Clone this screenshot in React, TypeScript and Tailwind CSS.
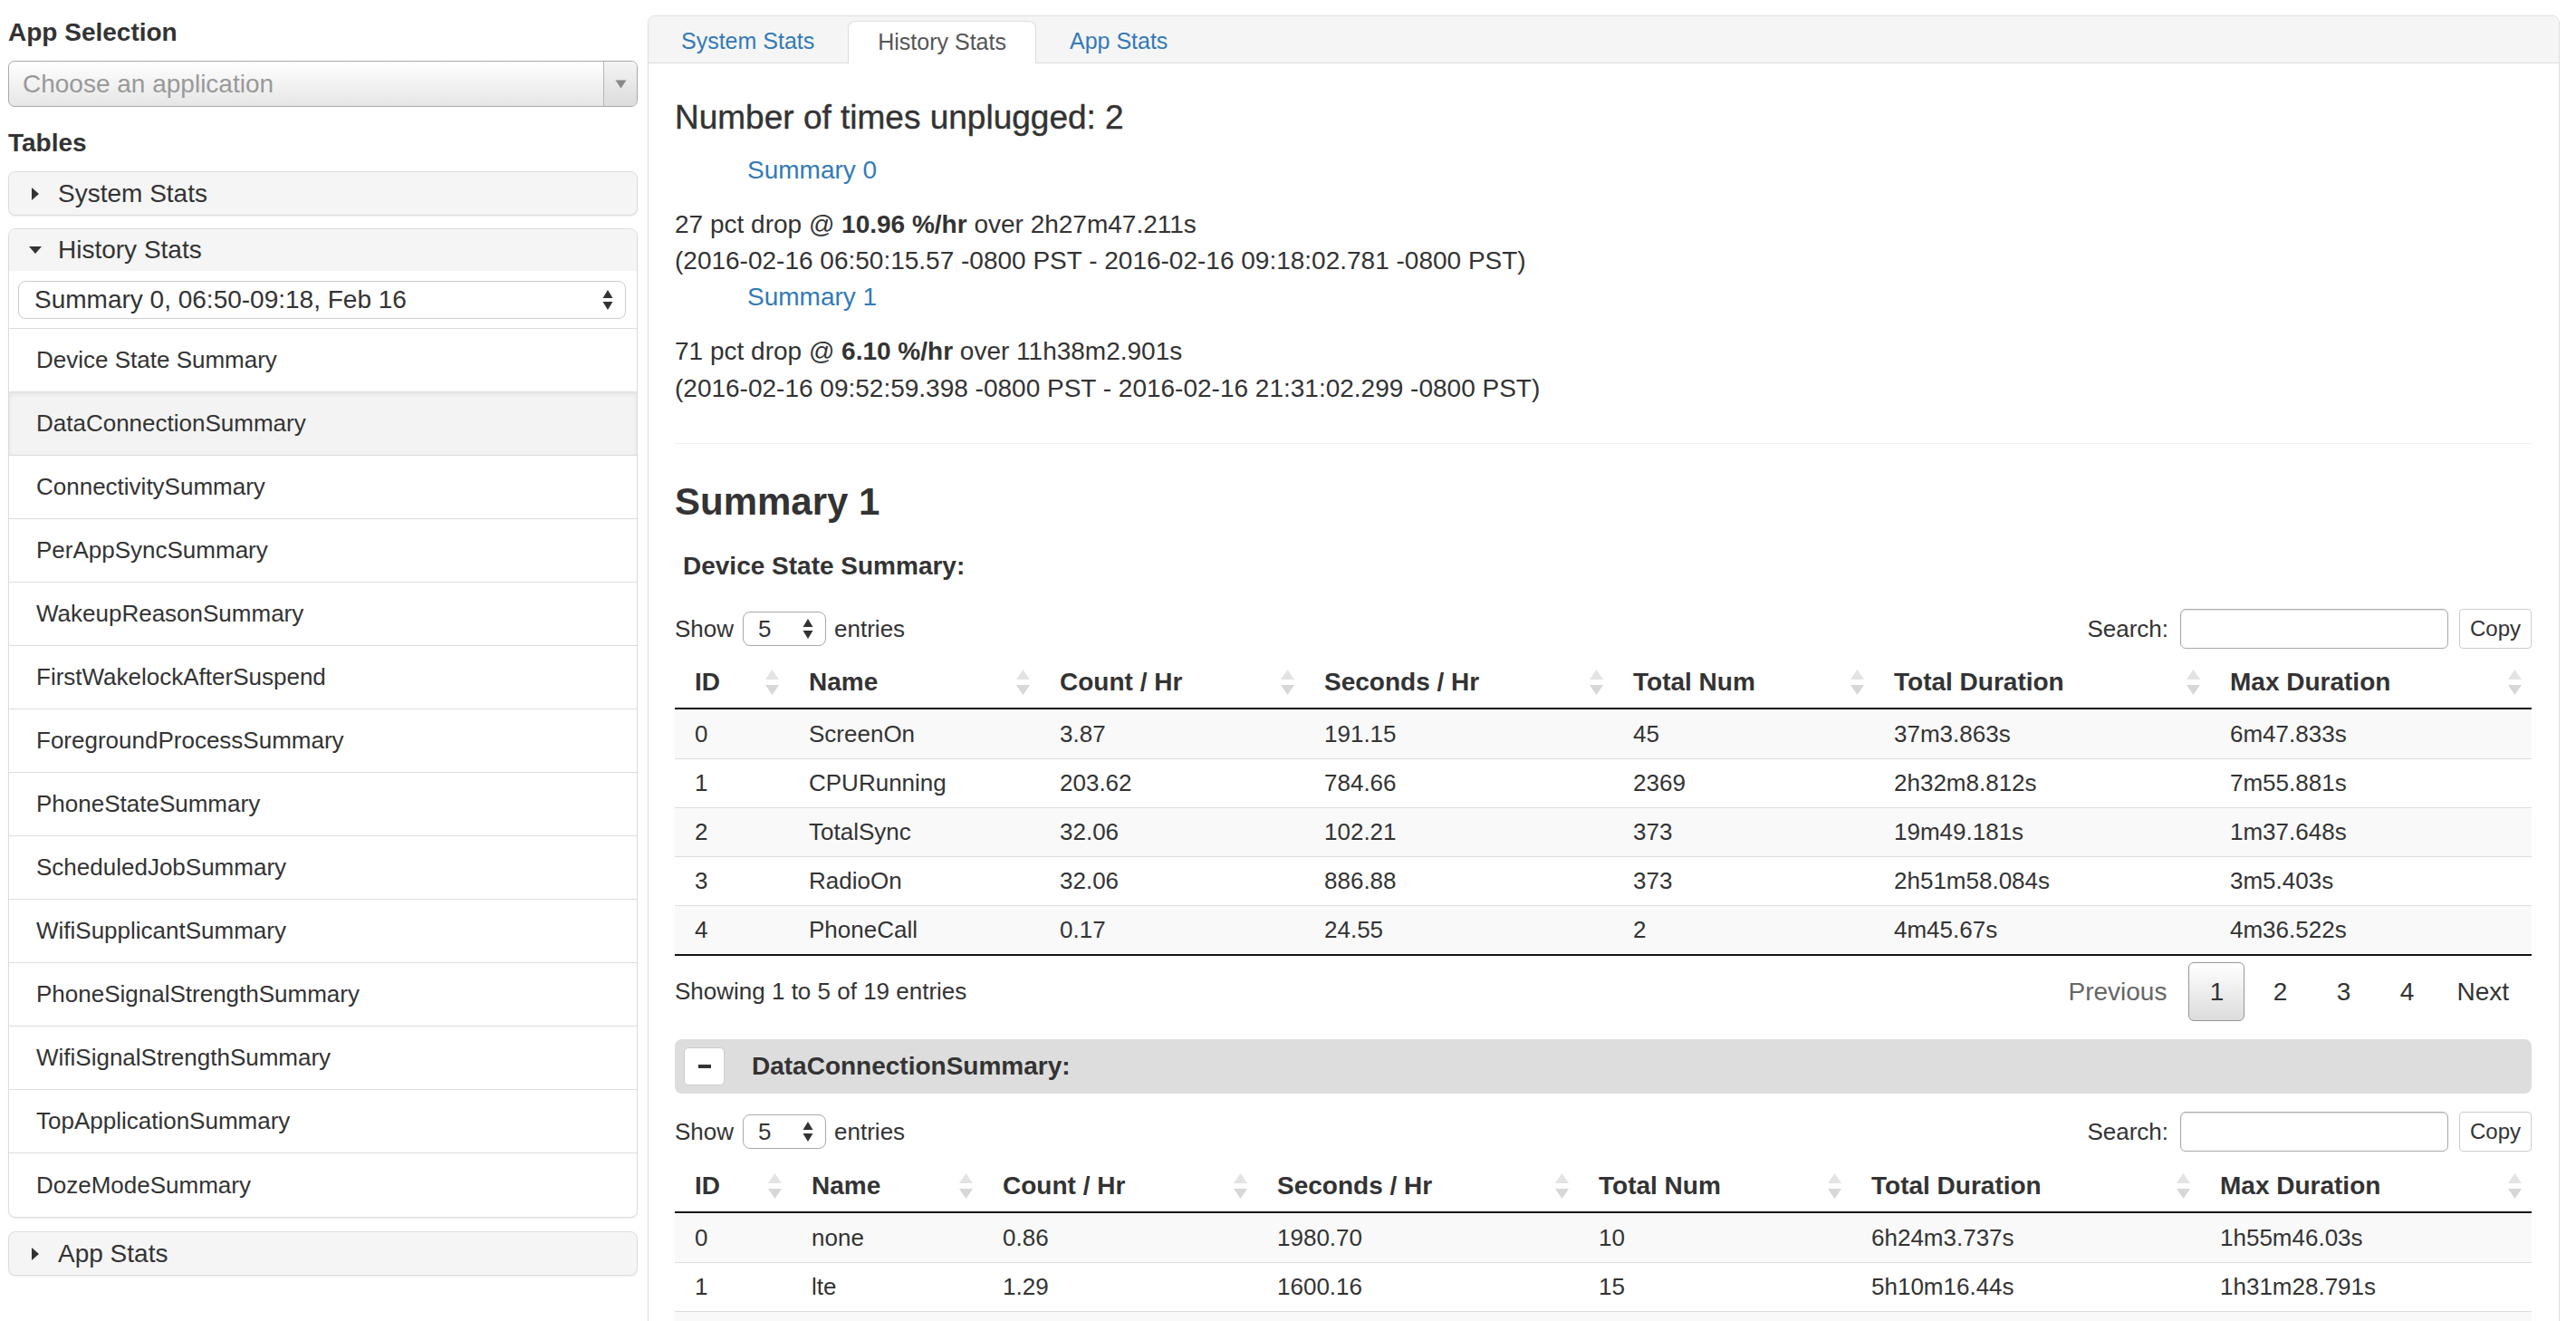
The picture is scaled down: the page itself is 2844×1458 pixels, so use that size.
import React from "react";

type Col = { label: string; w: string };

const cols1: Col[] = [
  { label: "ID", w: "w-[126px]" },
  { label: "Name", w: "w-[277px]" },
  { label: "Count / Hr", w: "w-[292px]" },
  { label: "Seconds / Hr", w: "w-[341px]" },
  { label: "Total Num", w: "w-[288px]" },
  { label: "Total Duration", w: "w-[371px]" },
  { label: "Max Duration", w: "w-[355px]" },
];

const cols2: Col[] = [
  { label: "ID", w: "w-[129px]" },
  { label: "Name", w: "w-[211px]" },
  { label: "Count / Hr", w: "w-[303px]" },
  { label: "Seconds / Hr", w: "w-[355px]" },
  { label: "Total Num", w: "w-[301px]" },
  { label: "Total Duration", w: "w-[385px]" },
  { label: "Max Duration", w: "w-[366px]" },
];

const rows1: string[][] = [
  ["0", "ScreenOn", "3.87", "191.15", "45", "37m3.863s", "6m47.833s"],
  ["1", "CPURunning", "203.62", "784.66", "2369", "2h32m8.812s", "7m55.881s"],
  ["2", "TotalSync", "32.06", "102.21", "373", "19m49.181s", "1m37.648s"],
  ["3", "RadioOn", "32.06", "886.88", "373", "2h51m58.084s", "3m5.403s"],
  ["4", "PhoneCall", "0.17", "24.55", "2", "4m45.67s", "4m36.522s"],
];

const rows2: string[][] = [
  ["0", "none", "0.86", "1980.70", "10", "6h24m3.737s", "1h55m46.03s"],
  ["1", "lte", "1.29", "1600.16", "15", "5h10m16.44s", "1h31m28.791s"],
  ["", "", "", "", "", "", ""],
];

const items = [
  "Device State Summary",
  "DataConnectionSummary",
  "ConnectivitySummary",
  "PerAppSyncSummary",
  "WakeupReasonSummary",
  "FirstWakelockAfterSuspend",
  "ForegroundProcessSummary",
  "PhoneStateSummary",
  "ScheduledJobSummary",
  "WifiSupplicantSummary",
  "PhoneSignalStrengthSummary",
  "WifiSignalStrengthSummary",
  "TopApplicationSummary",
  "DozeModeSummary",
];

const SortIcon = () => (
  <svg width="17" height="30" viewBox="0 0 17 30" className="shrink-0">
    <path d="M8.5 1 L16 12 L1 12 Z" fill="#e3e3e3" />
    <path d="M1 18 L16 18 L8.5 29 Z" fill="#d7d7d7" />
  </svg>
);

const UpDown = () => (
  <svg width="12" height="24" viewBox="0 0 12 24" className="shrink-0">
    <path d="M6 1 L11.5 10 L0.5 10 Z" fill="#333" />
    <path d="M0.5 14 L11.5 14 L6 23 Z" fill="#333" />
  </svg>
);

const RightTri = () => (
  <svg width="10" height="16" viewBox="0 0 10 16" className="shrink-0">
    <path d="M1 1 L9 8 L1 15 Z" fill="#333" />
  </svg>
);

const DownTri = () => (
  <svg width="16" height="10" viewBox="0 0 16 10" className="shrink-0">
    <path d="M1 1 L15 1 L8 9 Z" fill="#333" />
  </svg>
);

function ShowRow() {
  return (
    <div className="flex items-center h-[44px] text-[26px]">
      <span>Show</span>
      <div className="ml-[10px] w-[92px] h-[38px] rounded-[8px] border border-[#aaa] flex items-center justify-between pl-[16px] pr-[13px] bg-white">
        <span>5</span>
        <UpDown />
      </div>
      <span className="ml-[9px]">entries</span>
      <div className="ml-auto flex items-center">
        <span>Search:</span>
        <div className="ml-[13px] w-[296px] h-[44px] rounded-[6px] border border-[#aaa] bg-white shadow-[inset_0_1px_2px_rgba(0,0,0,0.12)]" />
        <div className="ml-[12px] w-[80px] h-[44px] rounded-[4px] border border-[#ccc] flex items-center justify-center text-[24px] bg-white">
          Copy
        </div>
      </div>
    </div>
  );
}

function DataTable({ cols, rows }: { cols: Col[]; rows: string[][] }) {
  return (
    <div className="w-[2050px] border-b-2 border-[#111]">
      <div className="flex h-[56px] border-b-2 border-[#111] box-content">
        {cols.map((c) => (
          <div key={c.label} className={`${c.w} shrink-0 flex items-center justify-between pl-[22px] pr-[10px] text-[28px] font-bold`}>
            <span>{c.label}</span>
            <SortIcon />
          </div>
        ))}
      </div>
      {rows.map((r, i) => (
        <div
          key={i}
          className={`flex h-[54px] ${i > 0 ? "border-t border-[#ddd]" : ""} ${i % 2 === 0 ? "bg-[#f9f9f9]" : "bg-white"}`}
        >
          {cols.map((c, j) => (
            <div key={c.label} className={`${c.w} shrink-0 flex items-center pl-[22px] text-[26px]`}>
              {r[j]}
            </div>
          ))}
        </div>
      ))}
    </div>
  );
}

export default function App() {
  return (
    <div className="w-[2844px] h-[1458px] overflow-hidden bg-white text-[#333] flex items-start font-['Liberation_Sans',Arial,sans-serif]">
      {/* Sidebar */}
      <aside className="w-[695px] ml-[9px] shrink-0">
        <div className="mt-[16px] h-[40px] leading-[40px] text-[28px] font-bold">App Selection</div>
        <div className="mt-[11px] h-[51px] rounded-[7px] border border-[#a9a9a9] bg-gradient-to-b from-white to-[#e6e6e6] flex overflow-hidden">
          <div className="flex-1 pl-[15px] text-[28px] text-[#999] leading-[49px]">Choose an application</div>
          <div className="w-[37px] border-l border-[#b5b5b5] flex items-center justify-center bg-gradient-to-b from-[#f4f4f4] to-[#dcdcdc]">
            <svg width="13" height="10" viewBox="0 0 13 10">
              <path d="M0.5 0.5 L12.5 0.5 L6.5 9.5 Z" fill="#888" />
            </svg>
          </div>
        </div>
        <div className="mt-[20px] h-[40px] leading-[40px] text-[28px] font-bold">Tables</div>

        <div className="mt-[11px] h-[49px] rounded-[8px] border border-[#ddd] bg-[#f5f5f5] shadow-[0_1px_2px_rgba(0,0,0,0.08)] flex items-center pl-[24px] text-[28px]">
          <RightTri />
          <span className="ml-[20px]">System Stats</span>
        </div>

        <div className="mt-[14px] rounded-[8px] border border-[#ddd] bg-white shadow-[0_1px_2px_rgba(0,0,0,0.08)] overflow-hidden">
          <div className="h-[46px] bg-[#f5f5f5] flex items-center pl-[21px] text-[28px]">
            <DownTri />
            <span className="ml-[17px]">History Stats</span>
          </div>
          <div className="pt-[11px] px-[10px] pr-[12px]">
            <div className="h-[42px] rounded-[8px] border border-[#ccc] flex items-center justify-between pl-[17px] pr-[13px] text-[28px] bg-white">
              <span>Summary 0, 06:50-09:18, Feb 16</span>
              <UpDown />
            </div>
          </div>
          <div className="mt-[10px] border-t border-[#ddd]">
            {items.map((it, i) => (
              <div
                key={it}
                className={`h-[70px] flex items-center pl-[30px] text-[26px] ${i < items.length - 1 ? "border-b border-[#ddd]" : ""} ${i === 1 ? "bg-[#f3f3f3] shadow-[inset_0_2px_5px_rgba(0,0,0,0.07)]" : ""}`}
              >
                {it}
              </div>
            ))}
          </div>
        </div>

        <div className="mt-[15px] h-[49px] rounded-[8px] border border-[#ddd] bg-[#f5f5f5] shadow-[0_1px_2px_rgba(0,0,0,0.08)] flex items-center pl-[24px] text-[28px]">
          <RightTri />
          <span className="ml-[20px]">App Stats</span>
        </div>
      </aside>

      {/* Main */}
      <main className="ml-[11px] mt-[17px] w-[2111px] shrink-0 border border-[#ddd] rounded-t-[8px] overflow-hidden">
        <div className="h-[52px] bg-[#f5f5f5] border-b border-[#ddd] flex items-end pl-[3px] gap-[4px] text-[25px]">
          <div className="h-[46px] px-[33px] flex items-center text-[#337ab7]">System Stats</div>
          <div className="h-[47px] -mb-[1px] px-[32px] flex items-center bg-white border border-[#ddd] border-b-0 rounded-t-[8px] text-[#555]">
            History Stats
          </div>
          <div className="h-[46px] px-[33px] flex items-center text-[#337ab7]">App Stats</div>
        </div>

        <div className="pl-[29px] pr-[30px]">
          <div className="mt-[40px] h-[40px] leading-[40px] text-[37px] [-webkit-text-stroke:0.4px_#333]">Number of times unplugged: 2</div>
          <div className="mt-[18px] pl-[80px] leading-[40px] text-[28px] text-[#337ab7]">Summary 0</div>
          <div className="mt-[20px] leading-[40px] text-[28px]">
            <div>
              27 pct drop @ <b>10.96 %/hr</b> over 2h27m47.211s
            </div>
            <div>(2016-02-16 06:50:15.57 -0800 PST - 2016-02-16 09:18:02.781 -0800 PST)</div>
          </div>
          <div className="pl-[80px] leading-[40px] text-[28px] text-[#337ab7]">Summary 1</div>
          <div className="mt-[19px] leading-[41px] text-[28px]">
            <div>
              71 pct drop @ <b>6.10 %/hr</b> over 11h38m2.901s
            </div>
            <div>(2016-02-16 09:52:59.398 -0800 PST - 2016-02-16 21:31:02.299 -0800 PST)</div>
          </div>
          <div className="mt-[40px] h-[1px] bg-[#eee]" />
          <div className="mt-[40px] h-[48px] leading-[48px] text-[42px] font-bold">Summary 1</div>
          <div className="mt-[27px] pl-[9px] h-[40px] leading-[40px] text-[28px] font-bold">Device State Summary:</div>

          <div className="mt-[27px]">
            <ShowRow />
          </div>
          <div className="mt-[9px]">
            <DataTable cols={cols1} rows={rows1} />
          </div>

          <div className="mt-[7px] flex items-center h-[65px] text-[26px]">
            <span>Showing 1 to 5 of 19 entries</span>
            <div className="ml-auto mr-[9px] flex items-center gap-[8px] text-[28px]">
              <div className="h-[65px] px-[16px] flex items-center text-[#666]">Previous</div>
              <div className="w-[62px] h-[65px] flex items-center justify-center rounded-[6px] border border-[#979797] bg-gradient-to-b from-white to-[#dcdcdc]">
                1
              </div>
              <div className="w-[62px] h-[65px] flex items-center justify-center">2</div>
              <div className="w-[62px] h-[65px] flex items-center justify-center">3</div>
              <div className="w-[62px] h-[65px] flex items-center justify-center">4</div>
              <div className="h-[65px] px-[16px] flex items-center">Next</div>
            </div>
          </div>

          <div className="mt-[20px] h-[60px] rounded-[8px] bg-[#dddddd] flex items-center pl-[10px]">
            <div className="w-[45px] h-[42px] rounded-[5px] border border-[#ccc] bg-white flex items-center justify-center">
              <div className="w-[14px] h-[4px] bg-[#333]" />
            </div>
            <span className="ml-[30px] text-[28px] font-bold">DataConnectionSummary:</span>
          </div>

          <div className="mt-[20px]">
            <ShowRow />
          </div>
          <div className="mt-[10px]">
            <DataTable cols={cols2} rows={rows2} />
          </div>
        </div>
      </main>
    </div>
  );
}
